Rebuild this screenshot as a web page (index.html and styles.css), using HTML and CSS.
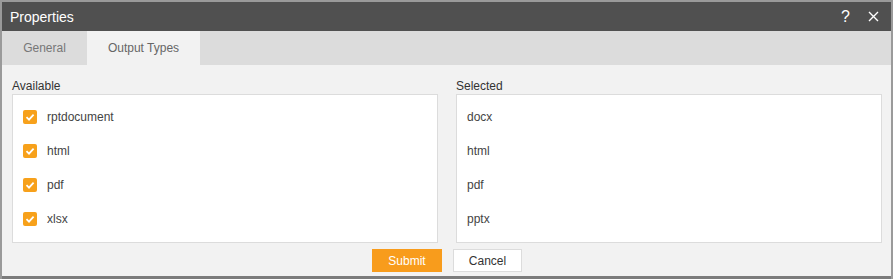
FILE: index.html
```html
<!DOCTYPE html>
<html lang="en">
<head>
  <meta charset="UTF-8">
  <title>Properties</title>
  <link rel="stylesheet" href="styles.css">
</head>
<body>

  <div class="dialog">

    <div class="title-bar">
      <span class="title">Properties</span>
      <span class="title-icons">
        <span class="help">?</span>
        <svg class="close" width="11" height="11" viewBox="0 0 11 11">
          <path d="M1 1 L10 10 M10 1 L1 10" stroke="#fff" stroke-width="1.4"/>
        </svg>
      </span>
    </div>

    <div class="tabs">
      <div class="tab">General</div>
      <div class="tab active">Output Types</div>
    </div>

    <div class="content">
      <div class="columns">
        <div class="column">
          <div class="col-label">Available</div>
          <ul class="list-box">
            <li><span class="check"><svg width="14" height="14" viewBox="0 0 14 14"><path d="M3.5 7.2 L6 9.6 L10.6 4.6" stroke="#fff" stroke-width="1.8" fill="none"/></svg></span>rptdocument</li>
            <li><span class="check"><svg width="14" height="14" viewBox="0 0 14 14"><path d="M3.5 7.2 L6 9.6 L10.6 4.6" stroke="#fff" stroke-width="1.8" fill="none"/></svg></span>html</li>
            <li><span class="check"><svg width="14" height="14" viewBox="0 0 14 14"><path d="M3.5 7.2 L6 9.6 L10.6 4.6" stroke="#fff" stroke-width="1.8" fill="none"/></svg></span>pdf</li>
            <li><span class="check"><svg width="14" height="14" viewBox="0 0 14 14"><path d="M3.5 7.2 L6 9.6 L10.6 4.6" stroke="#fff" stroke-width="1.8" fill="none"/></svg></span>xlsx</li>
          </ul>
        </div>
        <div class="column">
          <div class="col-label">Selected</div>
          <ul class="list-box selected">
            <li>docx</li>
            <li>html</li>
            <li>pdf</li>
            <li>pptx</li>
          </ul>
        </div>
      </div>

      <div class="buttons">
        <button class="btn submit">Submit</button>
        <button class="btn cancel">Cancel</button>
      </div>
    </div>

  </div>

</body>
</html>
```

FILE: styles.css
```css
body {
  font-family: "Liberation Sans", Arial, sans-serif;
  font-size: 12px;
  margin: 0;
  padding: 0;
  background: #9a9a9a;
}

.dialog {
  margin: 2px 2px 0 2px;
  height: 274px;
  background: #f2f2f2;
  display: flex;
  flex-direction: column;
  border-bottom: 3px solid #7c7c7c;
}

.title-bar {
  height: 29px;
  background: #505050;
  color: #fff;
  display: flex;
  align-items: center;
  justify-content: space-between;
  padding: 0 12px 0 8px;
}

.title {
  font-size: 14px;
}

.title-icons {
  display: flex;
  align-items: center;
  gap: 18px;
}

.help {
  font-size: 16px;
  line-height: 1;
}

.tabs {
  height: 34px;
  background: #dcdcdc;
  display: flex;
}

.tab {
  width: 85px;
  line-height: 34px;
  text-align: center;
  color: #777;
  font-size: 12px;
}

.tab.active {
  width: 113px;
  background: #f2f2f2;
  color: #666;
}

.content {
  flex: 1;
  padding: 14px 9px 0 10px;
}

.columns {
  display: flex;
  gap: 18px;
}

.column {
  flex: 1;
}

.col-label {
  color: #333;
  line-height: 15px;
}

.list-box {
  list-style-type: none;
  margin: 0;
  padding: 5px 0 0 0;
  height: 142px;
  background: #fff;
  border: 1px solid #dcdcdc;
}

.list-box li {
  height: 34px;
  display: flex;
  align-items: center;
  padding-left: 10px;
  color: #444;
}

.check {
  width: 14px;
  height: 14px;
  background: #f7a11b;
  border-radius: 2px;
  margin-right: 10px;
  display: flex;
}

.buttons {
  display: flex;
  justify-content: center;
  gap: 11px;
  margin-top: 6px;
}

.btn {
  font-family: "Liberation Sans", Arial, sans-serif;
  font-size: 12px;
  height: 23px;
  border: none;
  padding: 0;
  cursor: pointer;
}

.submit {
  width: 70px;
  background: #f89c1c;
  color: #fff;
}

.cancel {
  width: 69px;
  background: #fff;
  color: #333;
  border: 1px solid #dcdcdc;
}
```
